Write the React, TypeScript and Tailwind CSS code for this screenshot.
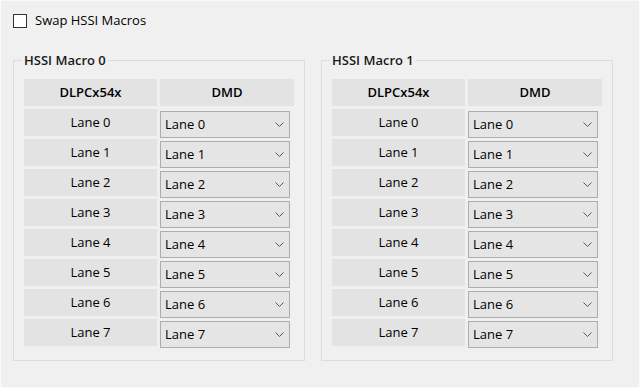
const lanes = [0, 1, 2, 3, 4, 5, 6, 7]

function Chevron() {
  return (
    <svg width="9" height="5" viewBox="0 0 9 5" className="shrink-0">
      <path d="M0.5 0.5 L4.5 4.5 L8.5 0.5" fill="none" stroke="#5a5a5a" strokeWidth="1" />
    </svg>
  )
}

function LaneSelect({ value }: { value: number }) {
  return (
    <div className="mt-[2px] ml-[2px] w-[130px] h-[27px] flex items-center justify-between pl-[4px] pr-[5px] bg-[#e5e5e5] border border-[#adadad]">
      <span>Lane {value}</span>
      <Chevron />
    </div>
  )
}

function MacroGroup({ title }: { title: string }) {
  return (
    <div className="relative w-[292px] h-[301px] border border-[#dcdcdc] pl-[10px] pt-[18px]">
      {/* group title sits over the top border */}
      <span className="absolute left-[8px] top-[-10px] px-[2px] bg-[#f0f0f0] leading-[18px] font-semibold text-[#1a1a1a]">
        {title}
      </span>
      <div className="flex flex-col gap-[3px]">
        <div className="flex gap-[3px] h-[27px]">
          <div className="w-[133px] flex items-center justify-center bg-[#e3e3e3] font-semibold">DLPCx54x</div>
          <div className="w-[134px] flex items-center justify-center bg-[#e3e3e3] font-semibold">DMD</div>
        </div>
        {lanes.map((lane) => (
          <div key={lane} className="flex gap-[1px] h-[27px] items-start">
            <div className="w-[133px] h-[27px] flex items-center justify-center bg-[#e3e3e3]">Lane {lane}</div>
            <LaneSelect value={lane} />
          </div>
        ))}
      </div>
    </div>
  )
}

export default function App() {
  return (
    <div
      className="w-[640px] h-[388px] bg-[#f0f0f0] border border-[#fafafa] pl-[12px] pt-[12px] text-[13px] text-black"
      style={{ fontFamily: '"Open Sans", "Noto Sans", sans-serif' }}
    >
      <label className="flex items-center gap-[8px] h-[15px]">
        <span className="w-[14px] h-[14px] bg-white border border-[#333333]" />
        <span>Swap HSSI Macros</span>
      </label>
      <div className="flex gap-[16px] mt-[32px]">
        <MacroGroup title="HSSI Macro 0" />
        <MacroGroup title="HSSI Macro 1" />
      </div>
    </div>
  )
}
